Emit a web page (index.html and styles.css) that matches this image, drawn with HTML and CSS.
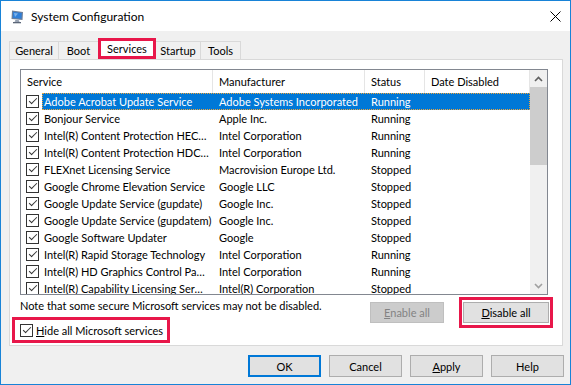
FILE: index.html
```html
<!DOCTYPE html>
<html lang="en">
<head>
    <meta charset="UTF-8">
    <title>System Configuration</title>
    <link rel="stylesheet" href="styles.css">
</head>
<body>

    <div class="window">
        <div class="titlebar">
            <svg class="app-icon" width="15" height="15" viewBox="0 0 15 15">
                <path d="M2 1.5 L13 3 L12.5 11 L1.5 10 Z" fill="#6e7f99"/>
                <path d="M3 2.7 L11.8 3.9 L11.4 9.8 L2.7 9 Z" fill="#2f7fd8"/>
                <path d="M4 4 L8 4.5 L5 8 Z" fill="#9cc8f2" opacity="0.7"/>
                <path d="M5.5 11 L9 11.3 L9.5 13 L4.5 12.8 Z" fill="#8a96a8"/>
                <rect x="3" y="13" width="8" height="1.3" fill="#5b6678"/>
            </svg>
            <span class="title">System Configuration</span>
            <span class="close">
                <svg width="11" height="11" viewBox="0 0 11 11">
                    <path d="M0.5 0.5 L10.5 10.5 M10.5 0.5 L0.5 10.5" stroke="#000" stroke-width="1"/>
                </svg>
            </span>
        </div>

        <div class="client">
            <div class="tabs">
                <div class="tab tab-general">General</div>
                <div class="tab tab-boot">Boot</div>
                <div class="tab tab-services active">Services</div>
                <div class="tab tab-startup">Startup</div>
                <div class="tab tab-tools">Tools</div>
            </div>

            <div class="panel">
                <div class="listview">
                    <div class="lv-main">
                        <div class="lv-header">
                            <span>Service</span>
                            <span>Manufacturer</span>
                            <span>Status</span>
                            <span>Date Disabled</span>
                        </div>

                        <div class="row selected"><span class="cb"></span><div class="cells"><span>Adobe Acrobat Update Service</span><span>Adobe Systems Incorporated</span><span>Running</span><span></span></div></div>
                        <div class="row"><span class="cb"></span><div class="cells"><span>Bonjour Service</span><span>Apple Inc.</span><span>Running</span><span></span></div></div>
                        <div class="row"><span class="cb"></span><div class="cells"><span>Intel(R) Content Protection HEC…</span><span>Intel Corporation</span><span>Running</span><span></span></div></div>
                        <div class="row"><span class="cb"></span><div class="cells"><span>Intel(R) Content Protection HDC…</span><span>Intel Corporation</span><span>Running</span><span></span></div></div>
                        <div class="row"><span class="cb"></span><div class="cells"><span>FLEXnet Licensing Service</span><span>Macrovision Europe Ltd.</span><span>Stopped</span><span></span></div></div>
                        <div class="row"><span class="cb"></span><div class="cells"><span>Google Chrome Elevation Service</span><span>Google LLC</span><span>Stopped</span><span></span></div></div>
                        <div class="row"><span class="cb"></span><div class="cells"><span>Google Update Service (gupdate)</span><span>Google Inc.</span><span>Stopped</span><span></span></div></div>
                        <div class="row"><span class="cb"></span><div class="cells"><span>Google Update Service (gupdatem)</span><span>Google Inc.</span><span>Stopped</span><span></span></div></div>
                        <div class="row"><span class="cb"></span><div class="cells"><span>Google Software Updater</span><span>Google</span><span>Stopped</span><span></span></div></div>
                        <div class="row"><span class="cb"></span><div class="cells"><span>Intel(R) Rapid Storage Technology</span><span>Intel Corporation</span><span>Running</span><span></span></div></div>
                        <div class="row"><span class="cb"></span><div class="cells"><span>Intel(R) HD Graphics Control Pa…</span><span>Intel Corporation</span><span>Running</span><span></span></div></div>
                        <div class="row"><span class="cb"></span><div class="cells"><span>Intel(R) Capability Licensing Ser…</span><span>Intel(R) Corporation</span><span>Stopped</span><span></span></div></div>
                    </div>

                    <div class="scrollbar">
                        <div class="sb-btn">
                            <svg width="9" height="6" viewBox="0 0 9 6"><path d="M1 5 L4.5 1.5 L8 5" fill="none" stroke="#606060" stroke-width="1.6"/></svg>
                        </div>
                        <div class="sb-thumb"></div>
                        <div class="sb-btn sb-down">
                            <svg width="9" height="6" viewBox="0 0 9 6"><path d="M1 1 L4.5 4.5 L8 1" fill="none" stroke="#a0a0a0" stroke-width="1.6"/></svg>
                        </div>
                    </div>
                </div>

                <div class="below">
                    <div class="below-left">
                        <p class="note">Note that some secure Microsoft services may not be disabled.</p>
                        <label class="hide-ms mark"><span class="cb"></span><span><u>H</u>ide all Microsoft services</span></label>
                    </div>
                    <div class="below-actions">
                        <button class="btn btn-enable" disabled><u>E</u>nable all</button>
                        <div class="mark mark-btn">
                            <button class="btn btn-disable"><u>D</u>isable all</button>
                        </div>
                    </div>
                </div>
            </div>

            <div class="footer">
                <button class="btn btn-footer default">OK</button>
                <button class="btn btn-footer">Cancel</button>
                <button class="btn btn-footer"><u>A</u>pply</button>
                <button class="btn btn-footer">Help</button>
            </div>
        </div>
    </div>

</body>
</html>
```

FILE: styles.css
```css
body {
    margin: 0;
    font-family: Lato, "Noto Sans", sans-serif;
    font-size: 11px;
    color: #000;
    background: #fff;
}

.window {
    width: 571px;
    height: 385px;
    box-sizing: border-box;
    border: 1px solid #1883d7;
    background: #f0f0f0;
    display: flex;
    flex-direction: column;
}

/* barra de titulo */
.titlebar {
    height: 30px;
    flex: none;
    background: #fff;
    display: flex;
    align-items: center;
    padding-left: 9px;
}

.app-icon {
    margin-right: 6px;
}

.title {
    flex: 1;
    font-size: 12px;
}

.close {
    width: 30px;
    height: 30px;
    display: flex;
    align-items: center;
    justify-content: center;
}

.client {
    flex: 1;
    padding: 7px 7px 0 8px;
    display: flex;
    flex-direction: column;
}

/* pestañas */
.tabs {
    display: flex;
    align-items: flex-end;
    height: 21px;
}

.tab {
    box-sizing: border-box;
    height: 18px;
    border: 1px solid #d9d9d9;
    border-bottom: none;
    background: #f0f0f0;
    text-align: center;
    line-height: 18px;
    margin-left: -1px;
}

.tab-general { width: 50px; margin-left: 0; }
.tab-boot { width: 41px; }
.tab-services { width: 58px; }
.tab-startup { width: 46px; }
.tab-tools { width: 41px; }

.tab.active {
    height: 21px;
    background: #fff;
    border: 3px solid #e8174a;
    line-height: 15px;
    position: relative;
    z-index: 1;
}

.panel {
    box-sizing: border-box;
    height: 287px;
    border: 1px solid #d9d9d9;
    background: #fff;
    padding: 9px 9px 0 10px;
}

/* lista de servicios */
.listview {
    box-sizing: border-box;
    width: 528px;
    height: 226px;
    border: 1px solid #828790;
    display: flex;
}

.lv-main {
    flex: 1;
    overflow: hidden;
}

.lv-header {
    display: grid;
    grid-template-columns: 192px 152px 60px 1fr;
    height: 23px;
    line-height: 23px;
}

.lv-header span {
    padding-left: 6px;
    border-right: 1px solid #e5e5e5;
}

.row {
    display: flex;
    align-items: center;
    height: 17px;
}

.cb {
    position: relative;
    flex: none;
    box-sizing: border-box;
    width: 13px;
    height: 13px;
    border: 1px solid #333;
    background: #fff;
}

.cb::after {
    content: "";
    position: absolute;
    left: 2px;
    top: 2px;
    width: 7px;
    height: 3px;
    border-left: 1px solid #333;
    border-bottom: 1px solid #333;
    transform: rotate(-45deg);
}

.row .cb {
    margin: 0 3px 0 5px;
}

.cells {
    flex: 1;
    display: grid;
    grid-template-columns: 171px 152px 60px 1fr;
    height: 17px;
    line-height: 18px;
}

.cells span {
    padding-left: 6px;
    white-space: nowrap;
    overflow: hidden;
}

.cells span:first-child {
    padding-left: 2px;
}

.row.selected .cells {
    background: #0078d7;
    color: #fff;
    outline: 1px dotted #f0a53a;
    outline-offset: -1px;
}

.scrollbar {
    width: 17px;
    flex: none;
    background: #f0f0f0;
    display: flex;
    flex-direction: column;
}

.sb-btn {
    height: 17px;
    display: flex;
    align-items: center;
    justify-content: center;
}

.sb-down {
    margin-top: auto;
}

.sb-thumb {
    height: 78px;
    background: #cdcdcd;
}

/* debajo de la lista */
.below {
    display: flex;
    justify-content: space-between;
}

.note {
    margin: 3px 0 0;
    line-height: 15px;
}

.mark {
    border: 3px solid #e8174a;
}

.hide-ms {
    box-sizing: border-box;
    width: 158px;
    height: 26px;
    margin: 4px 0 0 -8px;
    padding-left: 5px;
    display: flex;
    align-items: center;
    gap: 3px;
    white-space: nowrap;
}

.below-actions {
    display: flex;
    align-items: flex-start;
    margin-top: 2px;
}

.btn {
    box-sizing: border-box;
    height: 21px;
    padding: 0;
    border: 1px solid #adadad;
    background: #e1e1e1;
    font-family: inherit;
    font-size: 11px;
    color: #000;
}

.btn:disabled {
    background: #cccccc;
    border-color: #bfbfbf;
    color: #838383;
}

.btn-enable {
    width: 74px;
    margin: 5px 15px 0 0;
}

.mark-btn {
    padding: 2px 1px;
    display: flex;
}

.btn-disable {
    width: 86px;
}

.footer {
    display: flex;
    justify-content: flex-end;
    gap: 8px;
    margin: 9px -1px 0 0;
}

.btn-footer {
    width: 73px;
    height: 22px;
}

.btn.default {
    border: 2px solid #0078d7;
}
```
